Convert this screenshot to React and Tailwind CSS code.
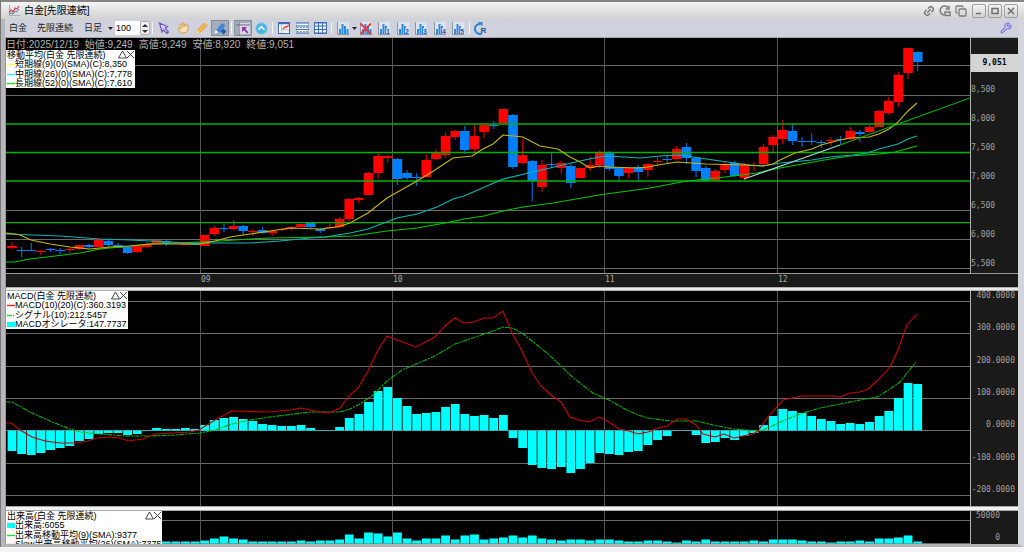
import { useState } from 'react';
import { Wrench, Hand, Copy, Link2 } from 'lucide-react';

const STEP = 9.635;
const FIRST = 12;
const xAt = (i) => FIRST + i * STEP;

// [up, body top, body bottom, high, low]
const CANDLES = [
  [1, 246, 248, 242, 249], [0, 250, 251, 247, 257], [0, 250, 251, 243, 251], [1, 251, 252, 250, 255],
  [0, 249, 250, 248, 252], [0, 250, 251, 248, 254], [1, 249, 250, 248, 253], [1, 245, 249, 245, 250],
  [0, 245, 247, 244, 248], [1, 239, 247, 239, 247], [0, 241, 245, 240, 247], [0, 245, 248, 243, 248],
  [0, 247, 253, 246, 254], [1, 246, 252, 245, 253], [1, 244, 247, 242, 248], [1, 240, 244, 240, 244],
  [0, 241, 244, 240, 246], [1, 243, 244, 243, 244], [1, 243, 245, 243, 245], [0, 243, 245, 243, 245],
  [1, 235, 246, 235, 246], [1, 228, 234, 226, 236], [0, 228, 229, 224, 232], [1, 226, 229, 220, 230],
  [0, 226, 231, 225, 235], [1, 231, 232, 229, 236], [0, 230, 233, 227, 234], [1, 231, 233, 230, 236],
  [1, 229, 230, 228, 231], [1, 227, 229, 226, 230], [1, 224, 227, 224, 227], [0, 223, 227, 222, 228],
  [0, 229, 231, 228, 233], [1, 227, 228, 223, 229], [1, 219, 227, 217, 228], [1, 199, 219, 198, 222],
  [1, 198, 200, 197, 204], [1, 173, 195, 172, 195], [1, 156, 173, 153, 179], [1, 156, 158, 155, 163],
  [0, 159, 179, 158, 185], [0, 173, 178, 170, 182], [0, 177, 178, 173, 186], [1, 160, 177, 154, 178],
  [1, 153, 159, 149, 160], [1, 136, 155, 132, 158], [1, 131, 137, 130, 140], [0, 131, 150, 126, 154],
  [1, 136, 149, 125, 152], [1, 125, 132, 124, 138], [0, 125, 126, 121, 129], [1, 109, 123, 109, 125],
  [0, 115, 167, 114, 169], [1, 155, 163, 139, 164], [0, 161, 181, 160, 201], [1, 165, 187, 160, 192],
  [0, 164, 165, 153, 168], [1, 163, 168, 161, 174], [0, 166, 183, 164, 188], [1, 168, 178, 168, 178],
  [1, 165, 168, 156, 171], [1, 152, 165, 150, 168], [0, 152, 169, 151, 171], [0, 167, 176, 167, 182],
  [1, 168, 173, 167, 178], [0, 167, 172, 165, 182], [1, 164, 170, 163, 177], [1, 161, 162, 157, 166],
  [0, 159, 160, 156, 164], [1, 149, 159, 146, 160], [0, 147, 158, 143, 164], [0, 158, 171, 157, 177],
  [0, 168, 181, 166, 182], [1, 171, 181, 169, 181], [1, 164, 170, 162, 173], [0, 163, 176, 161, 177],
  [1, 165, 178, 163, 181], [1, 165, 166, 162, 171], [1, 147, 164, 144, 165], [1, 137, 145, 135, 152],
  [1, 130, 139, 120, 144], [0, 131, 141, 125, 145], [0, 141, 142, 137, 147], [0, 141, 142, 133, 145],
  [0, 142, 143, 140, 148], [1, 140, 141, 137, 146], [0, 139, 140, 136, 144], [1, 131, 139, 127, 140],
  [0, 132, 134, 130, 142], [1, 127, 132, 125, 133], [1, 111, 127, 110, 127], [1, 101, 113, 97, 115],
  [1, 75, 102, 72, 107], [1, 48, 73, 48, 79], [0, 52, 62, 51, 71],
];

const SMA_SHORT = '6,233 15,234 20,235 31,240 50,244 70,247 90,249 110,247 130,246 150,244 200,244 215,241 230,237 250,234 270,231 290,228 320,229 337,227 350,223 368,213 387,198 417,181 435,170 453,158 472,156 483,149 493,144 503,135 523,137 540,146 558,149 570,157 580,162 590,168 599,166 609,167 638,168 648,167 658,165 677,162 706,164 745,165 763,166 773,164 780,160 795,153 812,149 821,145 840,140 850,138 869,137 879,134 889,129 897,123 908,111 917,103';
const SMA_MID = '6,234 60,236 100,239 130,240 190,243 250,243 280,241 310,238 325,237 350,233 368,229 397,218 417,214 437,207 453,199 464,196 503,179 533,172 580,161 599,157 609,156 640,158 660,156 680,155 700,158 720,161 735,163 750,165 763,166 780,163 812,160 830,157 853,155 867,153 879,149 898,144 908,139 917,136';
const SMA_LONG = '6,262 14,262 30,259 55,256 80,253 100,249 120,247 150,244 200,242 220,241 250,239 270,238 325,237 353,236 387,231 417,228 445,223 464,219 484,216 503,211 523,207 553,203 599,195 650,188 687,181 717,178 757,173 780,168 830,159 850,156 880,154 895,152 917,146';
const MACD_LINE = '6,423 11,423 20,430 32,437 45,441 60,443 75,443 87,441 97,438 110,437 120,438 128,441 143,439 155,434 190,432 199,430 215,420 232,411 270,412 290,410 301,408 315,411 329,413 340,408 349,396 358,388 368,371 378,350 387,336 397,340 416,347 435,337 445,326 455,318 464,323 474,322 484,318 493,318 503,311 513,335 522,351 532,373 541,386 551,395 561,402 570,417 579,420 589,422 599,417 609,422 619,429 629,431 638,434 648,432 658,428 667,426 677,419 686,419 696,425 703,434 715,437 724,434 734,438 743,436 753,434 758,431 767,418 783,400 802,396 833,396 840,397 850,393 860,392 868,389 878,380 890,367 898,350 907,325 917,314';
const SIGNAL_LINE = '6,402 12,402 30,412 50,421 70,429 80,432 100,434 125,436 150,436 175,435 200,433 215,430 232,424 250,420 270,417 310,412 340,412 350,409 360,404 373,395 387,381 402,370 416,364 435,356 455,344 464,341 484,334 493,331 503,327 512,328 522,333 532,341 547,353 561,366 570,375 580,383 593,393 609,400 623,408 638,415 648,418 670,421 697,421 713,425 733,429 760,431 770,427 787,419 803,413 820,408 840,404 860,400 877,397 890,389 900,382 907,373 916,362';

const OSCILLATOR = [
  451, 454, 455, 453, 450, 448, 446, 441, 439, 434, 433, 433, 435, 434, 431, 428, 429, 429, 428, 429,
  425, 420, 418, 417, 419, 421, 424, 425, 426, 426, 425, 428, 430, 431, 427, 418, 414, 402, 391, 387,
  398, 406, 414, 413, 412, 407, 404, 414, 416, 415, 418, 415, 438, 448, 465, 468, 469, 467, 473, 469,
  463, 453, 454, 455, 452, 451, 445, 440, 436, 430, 430, 435, 443, 442, 438, 440, 436, 433, 425, 416,
  409, 411, 413, 416, 419, 421, 424, 423, 424, 422, 416, 411, 398, 383, 384,
];

const VOLUME = [
  2, 3, 3, 2, 2, 2, 2, 3, 2, 3, 3, 2, 4, 3, 2, 2, 2, 2, 2, 2, 3, 5, 7, 5, 4, 2, 2, 2, 2, 2, 3, 2, 3, 3, 4,
  9, 5, 11, 10, 7, 11, 5, 3, 5, 5, 8, 4, 8, 9, 4, 5, 6, 8, 6, 8, 5, 4, 3, 4, 4, 3, 4, 4, 3, 2, 2, 3, 3,
  2, 1, 3, 2, 4, 2, 2, 2, 2, 3, 2, 4, 4, 4, 3, 2, 2, 1, 2, 2, 3, 2, 5, 5, 6, 8, 2,
];

const MONTHS = [200, 392, 604, 777];

const Grid = ({ rows, top, bottom }) => (
  <g stroke="#6a6a6a" strokeWidth="1" shapeRendering="crispEdges">
    {rows.map((y) => <line key={y} x1="6" x2="970" y1={y + 0.5} y2={y + 0.5} />)}
    {MONTHS.map((x) => <line key={x} x1={x + 0.5} x2={x + 0.5} y1={top} y2={bottom} stroke="#555" />)}
  </g>
);

const PriceChart = () => (
  <svg viewBox="6 38 964 235" preserveAspectRatio="none" className="block w-full h-[235px]">
    <Grid rows={[65, 95, 210, 239, 268]} top={38} bottom={273} />
    {CANDLES.map(([up, top, bottom, high, low], i) => {
      const color = up ? '#ff0000' : '#0080ff';
      return (
        <g key={i} fill={color}>
          <rect x={xAt(i) - 0.6} y={high} width="1.2" height={low - high} opacity="0.8" />
          <rect x={xAt(i) - 4.8} y={top} width="9.6" height={bottom - top} />
        </g>
      );
    })}
    <g stroke="#00b400" strokeWidth="1.3">
      {[124, 152.5, 181, 222.7].map((y) => <line key={y} x1="6" x2="970" y1={y} y2={y} />)}
    </g>
    <g fill="none" strokeWidth="1.1">
      <polyline points={SMA_LONG} stroke="#00c800" />
      <polyline points={SMA_MID} stroke="#00b8b8" />
      <polyline points={SMA_SHORT} stroke="#c8b800" />
      <polyline points="744,179 840,145" stroke="#a0d8d8" />
      <polyline points="840,145 970,98" stroke="#00b400" />
    </g>
  </svg>
);

const MacdChart = () => (
  <svg viewBox="6 291 964 215" preserveAspectRatio="none" className="block w-full h-[215px]">
    <Grid rows={[301, 333, 366, 398, 430, 463, 495]} top={291} bottom={506} />
    <g fill="#00ffff">
      {OSCILLATOR.map((y, i) => (
        <rect key={i} x={xAt(i) - 4.4} y={Math.min(y, 430.5)} width="8.8" height={Math.abs(y - 430.5)} />
      ))}
    </g>
    <g fill="none">
      <polyline points={SIGNAL_LINE} stroke="#00b400" strokeWidth="1.1" strokeDasharray="5 1 2 1" />
      <polyline points={MACD_LINE} stroke="#c80000" strokeWidth="1.1" />
    </g>
  </svg>
);

const VolumeChart = () => (
  <svg viewBox="6 511 964 33" preserveAspectRatio="none" className="block w-full h-[33px]">
    <Grid rows={[520, 543]} top={511} bottom={544} />
    <g fill="#00ffff">
      {VOLUME.map((h, i) => <rect key={i} x={xAt(i) - 4.4} y={543.5 - h} width="8.8" height={h} />)}
    </g>
  </svg>
);

const Swatch = ({ color, kind }) => (
  <svg width="8" height="8" viewBox="0 0 8 8" className="shrink-0">
    {kind === 'bar'
      ? <rect y="2" width="8" height="5" fill={color} />
      : <line x1="0" x2="8" y1="4.5" y2="4.5" stroke={color} strokeWidth="1.4" strokeDasharray={kind === 'dash' ? '5 1 1 1' : undefined} />}
  </svg>
);

const Legend = ({ title, rows, className }) => (
  <div className={`absolute left-0 pl-px bg-white text-black text-[9px] leading-[10px] whitespace-nowrap overflow-hidden ${className}`}>
    <div className="grid grid-rows-4 h-[38px]">
      <div className="flex justify-between">
        <span>{title}</span>
        <span className="flex shrink-0">
          <button aria-label="縮小" className="w-[9px]">
            <svg viewBox="0 0 9 9" className="w-[9px] h-[9px]"><path d="M4.5 1 L8.5 8 H.5 Z" fill="none" stroke="#333" strokeWidth=".9" /></svg>
          </button>
          <button aria-label="閉じる" className="w-[8px]">
            <svg viewBox="0 0 8 9" className="w-[8px] h-[9px]"><path d="M0 1 L7 8 M7 1 L0 8" stroke="#333" strokeWidth=".9" /></svg>
          </button>
        </span>
      </div>
      {rows.map(([label, color, kind]) => (
        <div key={label} className="flex items-center">
          <Swatch color={color} kind={kind} />
          <span>{label}</span>
        </div>
      ))}
    </div>
  </div>
);

const ToolButton = ({ label, pressed, children }) => (
  <button
    aria-label={label}
    className={`flex items-center justify-center w-[18px] h-[16px] shrink-0 ${pressed ? 'bg-[#a4aebb] border border-[#858e9c]' : ''}`}
  >
    {children}
  </button>
);

const Divider = () => <span className="w-px h-3 mx-0.5 shrink-0 bg-[#f2f3f6]" />;

const BarsIcon = ({ mark }) => (
  <svg viewBox="0 0 14 13" className="w-[14px] h-[13px]">
    <rect x="1" y="0" width="12" height="12" fill="#dde3ea" />
    <path d="M1.5 0V12.5H13" fill="none" stroke="#8d949e" />
    <path d="M3 7h2v5H3zM5.5 2h2v10h-2zM8 4h2v8H8zM10.5 7h2v5h-2z" fill="#2b8ae6" />
    {mark === 'x' && <path d="M1.5 1.5 L12 12 M12 1.5 L1.5 12" stroke="#e83a3a" strokeWidth="1.8" />}
    {mark && mark !== 'x' && (
      <>
        <rect x="9" y="6" width="5" height="6" fill="#d5deea" />
        <text x="11" y="12" textAnchor="middle" fontSize="7" fontWeight="700" fill="#1e5ca8">{mark}</text>
      </>
    )}
  </svg>
);

const GridIcon = ({ columns }) => (
  <svg viewBox="0 0 13 12" className="w-[13px] h-[12px]">
    <rect x=".5" y=".5" width="12" height="11" fill="#eef3f9" stroke={columns ? '#3c6eb4' : '#b4becb'} />
    <path d="M0 1H13M0 4H13M0 7.5H13M0 11H13" stroke="#3c6eb4" strokeWidth="1.1" />
    {columns
      ? <path d="M4.5 0V12M8.5 0V12" stroke="#3c6eb4" />
      : <path d="M1 9.5H12M1 5.5H12" stroke="#6b7c92" strokeDasharray="2 1" strokeWidth=".8" />}
  </svg>
);

const WindowButton = ({ label, children }) => (
  <button aria-label={label} className="flex items-center justify-center w-[14px] h-[14px] rounded-xs border border-[#a0a0a0] bg-linear-to-b from-[#f4f4f4] to-[#cfcfcf]">
    <svg viewBox="0 0 10 10" className="w-[10px] h-[10px]" fill="none" stroke="#707070" strokeWidth="1.5">{children}</svg>
  </button>
);

const TitleBar = () => (
  <header className="flex items-center h-[19px] pl-[7px] pr-[6px] border-t-2 border-[#858585] bg-linear-to-b from-[#f4f4f4] to-[#d2d2d2]">
    <svg viewBox="0 0 12 12" className="w-[12px] h-[12px]" fill="none">
      <path d="M1.5 0V10.5H12" stroke="#a8aeb8" />
      <path d="M1 8L3 5L5 7L7 3L9 4L11 1" stroke="#e04848" strokeWidth="1.3" />
      <path d="M1 10L3 8L5 9L7 6L9 7L11 4" stroke="#4d7fc4" />
    </svg>
    <h1 className="ml-1 text-[10px] leading-none text-black">白金[先限連続]</h1>
    <div className="ml-auto flex items-center gap-[4px] text-[#7c7c7c]">
      <button aria-label="リンク"><Link2 size={12} strokeWidth={3} className="-rotate-45" /></button>
      <button aria-label="更新">
        <svg viewBox="0 0 12 12" className="w-[12px] h-[12px]" fill="none" stroke="currentColor" strokeWidth="1.5">
          <path d="M9 2.5A4.5 4.5 0 1 0 5 10M6.5 4H10V.8" />
          <rect x="6" y="7" width="5" height="3.5" />
        </svg>
      </button>
      <button aria-label="複製"><Copy size={12} strokeWidth={2.6} /></button>
      <div className="ml-px flex gap-[2px]">
        <WindowButton label="最小化"><path d="M2 7.5H7" /></WindowButton>
        <WindowButton label="最大化"><rect x="2" y="2.5" width="6" height="5" /></WindowButton>
        <WindowButton label="閉じる"><path d="M2 2L8 8M8 2L2 8" /></WindowButton>
      </div>
    </div>
  </header>
);

const Toolbar = ({ count, onCount }) => (
  <div className="flex items-center h-[18px] pl-[4px] pr-[6px] bg-[#cfd2dc] text-[9px] leading-none text-[#222]">
    <button className="w-[28px] text-left">白金</button>
    <button className="w-[47px] text-left whitespace-nowrap">先限連続</button>
    <button className="flex items-center w-[31px] gap-[6px] whitespace-nowrap">
      日足
      <svg viewBox="0 0 5 3" className="w-[5px] h-[3px]"><path d="M0 0H5L2.5 3Z" fill="#222" /></svg>
    </button>
    <label className="flex items-center h-[14px]">
      <input
        aria-label="本数"
        value={count}
        onChange={(e) => onCount(Number(e.target.value) || 0)}
        className="w-[25px] h-[14px] bg-white pl-px text-[9px] text-black outline-none"
      />
    </label>
    <span className="flex flex-col w-[10px] h-[14px] rounded-xs border border-[#b0b0b0] bg-[#f0f0f0]">
      <button aria-label="増やす" onClick={() => onCount(count + 1)} className="flex flex-1 items-center justify-center">
        <svg viewBox="0 0 6 3" className="w-[6px] h-[3px]"><path d="M0 3H6L3 0Z" fill="#333" /></svg>
      </button>
      <button aria-label="減らす" onClick={() => onCount(count - 1)} className="flex flex-1 items-center justify-center">
        <svg viewBox="0 0 6 3" className="w-[6px] h-[3px]"><path d="M0 0H6L3 3Z" fill="#333" /></svg>
      </button>
    </span>
    <Divider />
    <div className="flex justify-between w-[74px]">
      <ToolButton label="選択">
        <svg viewBox="0 0 12 13" className="w-[12px] h-[13px]"><path d="M1.5 1L9.5 4.5L7 6.2L10.5 10L9 11.5L5.5 8L4 10Z" fill="#d9d0f4" stroke="#6a55b8" strokeWidth="1.2" /></svg>
      </ToolButton>
      <ToolButton label="移動"><Hand size={12} strokeWidth={2} fill="#fbe3b4" className="text-[#e0983c]" /></ToolButton>
      <ToolButton label="鉛筆">
        <svg viewBox="0 0 13 13" className="w-[13px] h-[13px]">
          <path d="M1 12L2.5 8L9.5 1L12 3.5L5 10.5Z" fill="#f5b547" stroke="#d58f24" strokeWidth=".7" />
          <path d="M1 12L2.3 8.5L4.6 10.7Z" fill="#fbe9cc" />
        </svg>
      </ToolButton>
      <ToolButton label="描画" pressed>
        <svg viewBox="0 0 14 13" className="w-[14px] h-[13px]">
          <path d="M1 11L9 1L12.5 3.5L6 11Z" fill="#3f86d8" />
          <path d="M1 11.5L3 8L5.5 10.5Z" fill="#fff" />
          <path d="M10.5 6.5L13.5 9.5L10.5 12.5L7.5 9.5Z" fill="#1f5fae" />
        </svg>
      </ToolButton>
    </div>
    <Divider />
    <div className="flex">
      <ToolButton label="クロスカーソル" pressed>
        <svg viewBox="0 0 14 13" className="w-[14px] h-[13px]" fill="none">
          <rect x="2" y="1" width="12" height="11" fill="#dcd6e4" />
          <path d="M3 0V13M0 3H14" stroke="#6d6a80" />
          <path d="M6 5H11L9.4 6.8L12.5 10.4L11.2 11.6L8 8.2L6 10Z" fill="#8a35b8" />
        </svg>
      </ToolButton>
      <ToolButton label="上へ">
        <svg viewBox="0 0 13 13" className="w-[13px] h-[13px]" fill="none">
          <circle cx="6.5" cy="6.5" r="5.7" fill="#48b4e2" stroke="#85cdea" />
          <path d="M3.5 7.8L6.5 4.6L9.5 7.8" stroke="#fff" strokeWidth="1.6" />
        </svg>
      </ToolButton>
    </div>
    <Divider />
    <div className="flex w-[54px]">
      <ToolButton label="表示設定">
        <svg viewBox="0 0 12 12" className="w-[12px] h-[12px]" fill="none">
          <rect x=".5" y=".5" width="11" height="11" fill="#f6f8fb" stroke="#3c6eb4" />
          <path d="M1 1.5H11" stroke="#3c6eb4" strokeWidth="1.5" />
          <path d="M3.5 2V11M4 8H11" stroke="#b9c4d2" />
          <path d="M5 7L7 5H8.5L11 3" stroke="#ec3c3c" strokeWidth="1.5" />
        </svg>
      </ToolButton>
      <ToolButton label="行表示"><GridIcon /></ToolButton>
      <ToolButton label="格子表示"><GridIcon columns /></ToolButton>
    </div>
    <Divider />
    <div className="flex items-center">
      <ToolButton label="テクニカル"><BarsIcon /></ToolButton>
      <svg viewBox="0 0 5 3" className="w-[5px] h-[3px]"><path d="M0 0H5L2.5 3Z" fill="#222" /></svg>
    </div>
    <div className="flex justify-between w-[110px]">
      {['x', '1', '2', '3', '4', '5'].map((mark) => (
        <ToolButton key={mark} label={mark === 'x' ? 'テクニカル削除' : `パターン${mark}`}><BarsIcon mark={mark} /></ToolButton>
      ))}
    </div>
    <Divider />
    <ToolButton label="再読込">
      <svg viewBox="0 0 14 13" className="w-[14px] h-[13px]" fill="none">
        <path d="M8 11.5A5 5 0 1 1 6.5 2" stroke="#2c86d8" strokeWidth="2" />
        <path d="M4 0H8.5V4.5Z" fill="#2c86d8" />
        <text x="9.5" y="11" textAnchor="middle" fontSize="8" fontWeight="700" fill="#1e4f94">R</text>
      </svg>
    </ToolButton>
    <button aria-label="設定" className="ml-auto"><Wrench size={12} strokeWidth={2.2} fill="#d8d4fb" className="text-[#7a70e8]" /></button>
  </div>
);

const Quotes = () => (
  <p className="absolute top-px left-0 flex gap-[6px] text-[10px] leading-[11px] text-[#b4b4b4] whitespace-nowrap">
    <span>日付:2025/12/19</span>
    <span>始値:9,249</span>
    <span>高値:9,249</span>
    <span>安値:8,920</span>
    <span>終値:9,051</span>
  </p>
);

const AXIS = "w-[48px] shrink-0 overflow-hidden border-l border-[#b0b0b0] bg-[#1a1a1a] font-['DejaVu_Sans_Mono',monospace] text-[8px] text-[#a0a0a0]";

const App = () => {
  const [count, setCount] = useState(100);

  return (
    <div className="bg-[#f4f4f6] pb-[5px] font-['Liberation_Sans','Noto_Sans_CJK_JP',sans-serif] select-none">
      <div className="border-l border-[#777] bg-[#b9b9bd]">
        <TitleBar />
        <div className="border-l-4 border-r-[6px] border-l-[#b8b8ba] border-r-[#d4d4dc] border-b-[3px] border-b-[#b4b4b4]">
          <Toolbar count={count} onCount={setCount} />
          <main className="border-l border-[#9a9a9a] bg-black">
            <section className="flex border-t border-[#aaa] h-[236px]">
              <div className="relative flex-1 min-w-0">
                <PriceChart />
                <Quotes />
                <Legend
                  className="top-[12px] w-[129px]"
                  title="移動平均(白金 先限連続)"
                  rows={[
                    ['短期線(9)(0)(SMA)(C):8,350', '#ffff40'],
                    ['中期線(26)(0)(SMA)(C):7,778', '#30f0f0'],
                    ['長期線(52)(0)(SMA)(C):7,610', '#20e020'],
                  ]}
                />
              </div>
              <div className={`${AXIS} h-[235px]`}>
                <div className="mt-[16px] mb-[3px] h-[18px] bg-[#d4d4d4] text-center font-bold leading-[18px] text-black">9,051</div>
                {['8,500', '8,000', '7,500', '7,000', '6,500', '6,000', '5,500'].map((p) => (
                  <div key={p} className="leading-[29px]">{p}</div>
                ))}
              </div>
            </section>

            <div className="grid grid-cols-[195fr_192fr_212fr_173fr_193fr_47px] h-[14px] border-t border-[#999] bg-[#1a1a1a] font-['DejaVu_Sans_Mono',monospace] text-[8px] leading-[11px] text-[#a8a8a8]">
              <span />
              <span>09</span>
              <span>10</span>
              <span>11</span>
              <span>12</span>
            </div>
            <div className="h-[4px] border-y border-[#b0b0b0] bg-[#e8e8e8]" />

            <section className="flex h-[215px]">
              <div className="relative flex-1 min-w-0">
                <MacdChart />
                <Legend
                  className="top-0 w-[122px]"
                  title="MACD(白金 先限連続)"
                  rows={[
                    ['MACD(10)(20)(C):360.3193', '#ff2020'],
                    ['シグナル(10):212.5457', '#20e020', 'dash'],
                    ['MACDオシレータ:147.7737', '#00ffff', 'bar'],
                  ]}
                />
              </div>
              <div className={AXIS}>
                <div className="flex flex-col justify-between h-[204px] pr-[3px] text-right leading-[10px]">
                  {['400.0000', '300.0000', '200.0000', '100.0000', '0.0000', '-100.0000', '-200.0000'].map((v) => (
                    <span key={v}>{v}</span>
                  ))}
                </div>
              </div>
            </section>

            <div className="h-[5px] border-y border-[#a8a8a8] bg-[#f2f2f2]" />

            <section className="flex h-[33px]">
              <div className="relative flex-1 min-w-0">
                <VolumeChart />
                <Legend
                  className="top-0 w-[156px] h-[33px]"
                  title="出来高(白金 先限連続)"
                  rows={[
                    ['出来高:6055', '#00ffff', 'bar'],
                    ['出来高移動平均(9)(SMA):9377', '#20e020'],
                    ['Slow出来高移動平均(26)(SMA):7375', '#e060e0'],
                  ]}
                />
              </div>
              <div className={AXIS}>
                <div className="flex flex-col justify-between h-[32px] pr-[18px] text-right leading-[10px]">
                  <span>50000</span>
                  <span>0</span>
                </div>
              </div>
            </section>
          </main>
        </div>
      </div>
    </div>
  );
};

export default App;
